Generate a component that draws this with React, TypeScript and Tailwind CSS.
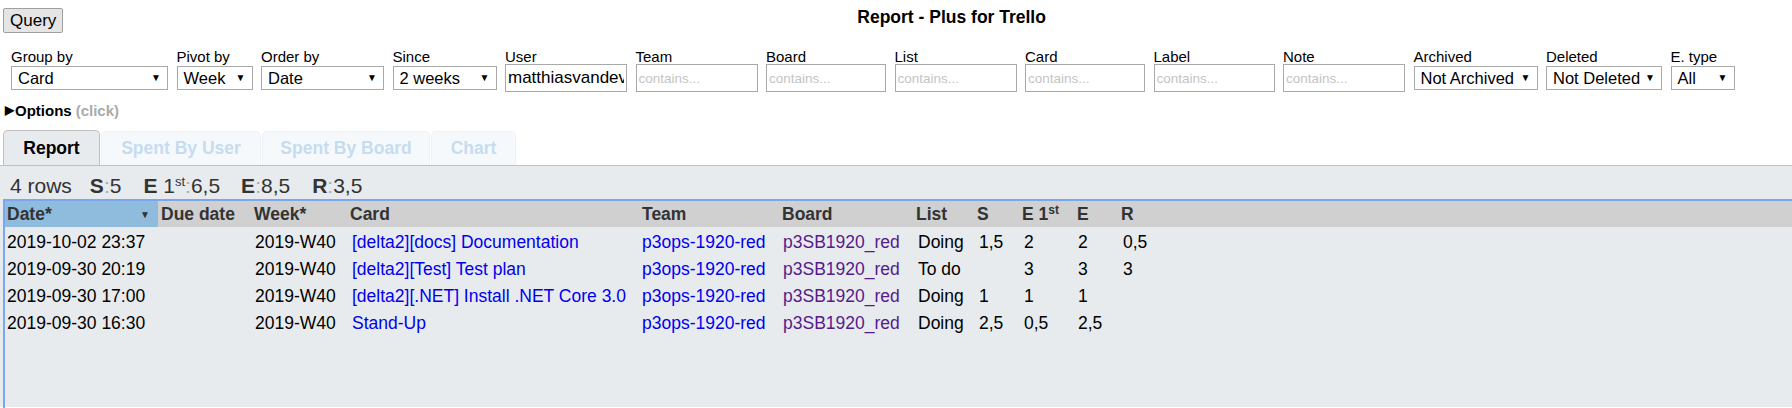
import React from 'react';

type Field = { label: string; kind: 'select' | 'input'; value?: string; w: string };

const fields: Field[] = [
  { label: 'Group by', kind: 'select', value: 'Card', w: 'w-[157px]' },
  { label: 'Pivot by', kind: 'select', value: 'Week', w: 'w-[76px]' },
  { label: 'Order by', kind: 'select', value: 'Date', w: 'w-[123px]' },
  { label: 'Since', kind: 'select', value: '2 weeks', w: 'w-[104px]' },
  { label: 'User', kind: 'input', value: 'matthiasvandevelde', w: 'w-[122px]' },
  { label: 'Team', kind: 'input', w: 'w-[122px]' },
  { label: 'Board', kind: 'input', w: 'w-[120px]' },
  { label: 'List', kind: 'input', w: 'w-[122px]' },
  { label: 'Card', kind: 'input', w: 'w-[120px]' },
  { label: 'Label', kind: 'input', w: 'w-[121px]' },
  { label: 'Note', kind: 'input', w: 'w-[122px]' },
  { label: 'Archived', kind: 'select', value: 'Not Archived', w: 'w-[124px]' },
  { label: 'Deleted', kind: 'select', value: 'Not Deleted', w: 'w-[116px]' },
  { label: 'E. type', kind: 'select', value: 'All', w: 'w-[64px]' },
];

const rows = [
  { date: '2019-10-02 23:37', week: '2019-W40', card: '[delta2][docs] Documentation', list: 'Doing', s: '1,5', e1: '2', e: '2', r: '0,5' },
  { date: '2019-09-30 20:19', week: '2019-W40', card: '[delta2][Test] Test plan', list: 'To do', s: '', e1: '3', e: '3', r: '3' },
  { date: '2019-09-30 17:00', week: '2019-W40', card: '[delta2][.NET] Install .NET Core 3.0', list: 'Doing', s: '1', e1: '1', e: '1', r: '' },
  { date: '2019-09-30 16:30', week: '2019-W40', card: 'Stand-Up', list: 'Doing', s: '2,5', e1: '0,5', e: '2,5', r: '' },
];

// column starts follow the report grid of the original page
const cols = 'grid grid-cols-[153px_94px_96px_292px_140px_134px_61px_45px_55px_44px_1fr]';

const SelectBox = ({ value, w }: { value?: string; w: string }) => (
  <div className={`${w} h-[24px] flex items-center justify-between border border-[#a9a9a9] bg-white pl-[6px] pr-[6px] text-[16.5px] text-black`}>
    <span className="leading-none">{value}</span>
    <span className="text-[10px] leading-none">▼</span>
  </div>
);

const TextBox = ({ value, w }: { value?: string; w: string }) => (
  <input
    className={`${w} h-[28px] border border-[#a9a9a9] bg-white px-[2px] outline-none ${value ? 'text-[17px] text-black' : 'text-[13.5px]'} placeholder:text-[#c4c4c4]`}
    defaultValue={value}
    placeholder="contains..."
  />
);

const Colon = () => <span className="text-[#aaaaaa] font-normal">:</span>;

export default function App() {
  return (
    <div className="w-full h-[408px] overflow-hidden bg-white font-['Liberation_Sans',Arial,sans-serif] text-black">
      <div className="flex items-start pt-[8px] pl-[3px]">
        <button className="h-[25px] px-[6px] border border-[#a0a0a0] rounded-[2px] bg-[#e5e5e5] text-[17px] leading-none">
          Query
        </button>
        <h1 className="ml-[794px] mt-[1px] text-[17.5px] font-bold leading-[17px]">Report - Plus for Trello</h1>
      </div>

      <div className="flex gap-[8.5px] pl-[11px] mt-[15px]">
        {fields.map((f) => (
          <div key={f.label} className="flex flex-col">
            <label className="text-[15px] leading-[16px] h-[16px] pt-[1px]">{f.label}</label>
            <div className="h-[28px] flex items-center">
              {f.kind === 'select' ? <SelectBox value={f.value} w={f.w} /> : <TextBox value={f.value} w={f.w} />}
            </div>
          </div>
        ))}
      </div>

      <div className="mt-[10px] pl-[5px] text-[15px] font-bold leading-[17px] flex items-center">
        <span className="text-[12px] mr-[1px]">▶</span>
        <span>Options</span>
        <span className="ml-[4px] text-[#aaaaaa]">(click)</span>
      </div>

      <div className="mt-[11px] flex pl-[3px] h-[35px] items-end">
        <div className="h-[35px] w-[97px] flex items-center justify-center border border-b-0 border-[#c0c0c0] rounded-t-[5px] bg-[#e8ebee] text-[17.5px] font-bold">
          Report
        </div>
        {['Spent By User', 'Spent By Board', 'Chart'].map((t, i) => (
          <div
            key={t}
            className={`h-[34px] ${i === 0 ? 'w-[160px]' : i === 1 ? 'w-[168px]' : 'w-[85px]'} ml-[1px] flex items-center justify-center border border-b-0 border-[#eef2f6] rounded-t-[5px] bg-[#f6f9fc] text-[17.5px] font-bold text-[#c6dcef]`}
          >
            {t}
          </div>
        ))}
      </div>

      <div className="border-t border-[#c0c0c0] bg-[#e8ebee] h-[242px]">
        <div className="h-[33px] pl-[10px] pt-[6px] flex items-center text-[21px] text-[#333333]">
          <span className="mr-[18px]">4 rows</span>
          <span className="mr-[22px]"><b>S</b><Colon />5</span>
          <span className="mr-[21px]"><b>E</b> 1<sup className="text-[13px]">st</sup><Colon />6,5</span>
          <span className="mr-[22px]"><b>E</b><Colon />8,5</span>
          <span><b>R</b><Colon />3,5</span>
        </div>

        <div className="ml-[3px] h-full border-t-2 border-l-2 border-[#7aa7ee]">
          <div className={`${cols} h-[26px] items-center bg-[#d0d0d0] text-[17.5px] font-bold text-[#333333]`}>
            <div className="h-full flex items-center justify-between bg-[#8fbcdc] pl-[2px] pr-[8px]">
              <span>Date*</span>
              <span className="text-[10px] text-[#333333]">▼</span>
            </div>
            <div className="pl-[3px]">Due date</div>
            <div className="pl-[2px]">Week*</div>
            <div className="pl-[2px]">Card</div>
            <div className="pl-[2px]">Team</div>
            <div className="pl-[2px]">Board</div>
            <div className="pl-[2px]">List</div>
            <div className="pl-[2px]">S</div>
            <div className="pl-[2px]">E 1<sup className="text-[12px]">st</sup></div>
            <div className="pl-[2px]">E</div>
            <div className="pl-[2px]">R</div>
          </div>
          {rows.map((r) => (
            <div key={r.date} className={`${cols} h-[27px] pt-[2px] items-center text-[17.5px]`}>
              <div className="pl-[2px]">{r.date}</div>
              <div />
              <div className="pl-[3px]">{r.week}</div>
              <div className="pl-[4px] text-[#0000ee]">{r.card}</div>
              <div className="pl-[2px] text-[#0000ee]">p3ops-1920-red</div>
              <div className="pl-[3px] text-[#551a8b]">p3SB1920_red</div>
              <div className="pl-[4px]">{r.list}</div>
              <div className="pl-[4px]">{r.s}</div>
              <div className="pl-[4px]">{r.e1}</div>
              <div className="pl-[3px]">{r.e}</div>
              <div className="pl-[4px]">{r.r}</div>
            </div>
          ))}
        </div>
      </div>
    </div>
  );
}
